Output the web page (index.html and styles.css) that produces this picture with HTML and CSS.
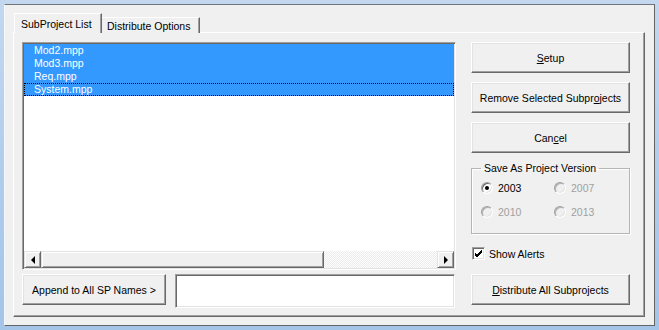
FILE: index.html
```html
<!DOCTYPE html>
<html lang="en">
<head>
    <meta charset="UTF-8">
    <title>Distribute Subprojects</title>
    <link rel="stylesheet" href="styles.css">
</head>
<body>
    <div class="dialog">
        <div class="tabs">
            <div class="tab active">SubProject List</div>
            <div class="tab">Distribute Options</div>
        </div>
        <div class="panel">
            <div class="left-col">
                <div class="listbox">
                    <ul class="items">
                        <li class="selected">Mod2.mpp</li>
                        <li class="selected">Mod3.mpp</li>
                        <li class="selected">Req.mpp</li>
                        <li class="selected focused">System.mpp</li>
                    </ul>
                    <div class="hscroll">
                        <div class="sb-btn"><span class="arrow-left"></span></div>
                        <div class="sb-thumb"></div>
                        <div class="sb-track"></div>
                        <div class="sb-btn"><span class="arrow-right"></span></div>
                    </div>
                </div>
                <div class="bottom-row">
                    <button class="btn append-btn">Append to All SP Names &gt;</button>
                    <div class="textbox"></div>
                </div>
            </div>
            <div class="right-col">
                <button class="btn"><u>S</u>etup</button>
                <button class="btn">Remove Selected Subpr<u>o</u>jects</button>
                <button class="btn">Can<u>c</u>el</button>
                <fieldset class="group">
                    <legend>Save As Project Version</legend>
                    <div class="radio-grid">
                        <label class="radio"><span class="circle checked"></span>2003</label>
                        <label class="radio disabled"><span class="circle"></span>2007</label>
                        <label class="radio disabled"><span class="circle"></span>2010</label>
                        <label class="radio disabled"><span class="circle"></span>2013</label>
                    </div>
                </fieldset>
                <label class="check">
                    <span class="box">
                        <svg width="9" height="9" viewBox="0 0 9 9"><path d="M1 4 L3 6 L8 1 M1 5 L3 7 L8 2 M1 6 L3 8 L8 3" stroke="#000" stroke-width="1" fill="none"/></svg>
                    </span>
                    Show Alerts
                </label>
                <button class="btn distribute-btn"><u>D</u>istribute All Subprojects</button>
            </div>
        </div>
    </div>
</body>
</html>
```

FILE: styles.css
```css
* {
    margin: 0;
    padding: 0;
    box-sizing: border-box;
    font-family: "Liberation Sans", Arial, sans-serif;
    font-size: 10.5px;
}

body {
    width: 659px;
    height: 330px;
    background: linear-gradient(180deg, #c3d8ef 0%, #aecbeb 60%, #a4c4e8 100%);
    overflow: hidden;
}

.dialog {
    margin: 4px 0 0 4px;
    width: 651px;
    height: 322px;
    background-color: #f0f0f0;
    border-top: 1px solid #70757c;
    border-right: 1px solid #646464;
    border-bottom: 1px solid #646464;
    border-left: 1px solid #f4f7fb;
    padding: 8px 0 0 8px;
}

/* tab strip */
.tabs {
    display: flex;
    align-items: flex-end;
    height: 20px;
    padding-left: 1px;
    margin-bottom: -1px;
    position: relative;
    z-index: 1;
}

.tab {
    height: 16px;
    line-height: 16px;
    white-space: nowrap;
    padding: 0 6px;
    border-top: 1px solid #fff;
    border-left: 1px solid #fff;
    border-right: 1px solid #696969;
    box-shadow: inset -1px 0 #a0a0a0;
    background-color: #f0f0f0;
    color: #000;
}

.tab.active {
    height: 20px;
    width: 88px;
    line-height: 16px;
    padding: 2px 0 0 6px;
}

.tab + .tab {
    width: 98px;
    padding-left: 5px;
    border-left: none;
}

/* tab page */
.panel {
    width: 632px;
    height: 285px;
    border-top: 1px solid #fff;
    border-left: 1px solid #fff;
    border-right: 1px solid #696969;
    border-bottom: 1px solid #696969;
    box-shadow: inset -1px -1px #a0a0a0;
    padding: 9px 0 0 8px;
    display: flex;
    gap: 15px;
}

.left-col {
    width: 434px;
    display: flex;
    flex-direction: column;
    gap: 4px;
}

.listbox {
    height: 228px;
    background-color: #fff;
    border-top: 1px solid #a0a0a0;
    border-left: 1px solid #a0a0a0;
    border-right: 1px solid #fff;
    border-bottom: 1px solid #fff;
    box-shadow: inset 1px 1px #696969, inset -1px -1px #e3e3e3;
    padding: 1px;
    display: flex;
    flex-direction: column;
}

.items {
    list-style: none;
    flex: 1;
}

.items li {
    height: 13px;
    line-height: 13px;
    padding-left: 10px;
    color: #000;
}

.items li.selected {
    background-color: #3399ff;
    color: #fff;
}

.items li.focused {
    outline: 1px dotted #000;
    outline-offset: -1px;
}

/* horizontal scrollbar */
.hscroll {
    height: 17px;
    display: flex;
}

.sb-btn,
.sb-thumb {
    background-color: #f0f0f0;
    border-top: 1px solid #e3e3e3;
    border-left: 1px solid #e3e3e3;
    border-right: 1px solid #696969;
    border-bottom: 1px solid #696969;
    box-shadow: inset 1px 1px #fff, inset -1px -1px #a0a0a0;
}

.sb-btn {
    width: 17px;
    display: flex;
    align-items: center;
    justify-content: center;
}

.sb-thumb {
    width: 283px;
}

.sb-track {
    flex: 1;
    background: repeating-conic-gradient(#fff 0 25%, #ebebeb 0 50%) 0 0 / 2px 2px;
}

.arrow-left {
    width: 0;
    height: 0;
    border-top: 4px solid transparent;
    border-bottom: 4px solid transparent;
    border-right: 4px solid #000;
}

.arrow-right {
    width: 0;
    height: 0;
    border-top: 4px solid transparent;
    border-bottom: 4px solid transparent;
    border-left: 4px solid #000;
}

.bottom-row {
    display: flex;
    gap: 9px;
}

.textbox {
    width: 280px;
    height: 34px;
    background-color: #fff;
    border-top: 1px solid #a0a0a0;
    border-left: 1px solid #a0a0a0;
    border-right: 1px solid #fff;
    border-bottom: 1px solid #fff;
    box-shadow: inset 1px 1px #696969, inset -1px -1px #e3e3e3;
}

/* push buttons */
.btn {
    display: block;
    width: 159px;
    height: 31px;
    background-color: #f0f0f0;
    color: #000;
    border-top: 1px solid #fff;
    border-left: 1px solid #fff;
    border-right: 1px solid #696969;
    border-bottom: 1px solid #696969;
    box-shadow: inset -1px -1px #a0a0a0, inset 1px 1px #e3e3e3;
    text-align: center;
}

.btn u {
    font-size: inherit;
}

.append-btn {
    width: 144px;
}

.right-col {
    width: 159px;
    display: flex;
    flex-direction: column;
    gap: 9px;
}

/* group box */
.group {
    width: 159px;
    height: 72px;
    border: 1px solid #b5b5b5;
    box-shadow: 1px 1px #fff, inset 1px 1px #fff;
    padding: 1px 0 0 9px;
}

.group legend {
    margin-left: 0;
    padding: 0 3px;
    line-height: 13px;
    color: #000;
}

.radio-grid {
    display: grid;
    grid-template-columns: 73px 73px;
    grid-auto-rows: 24px;
}

.radio {
    display: flex;
    align-items: center;
    gap: 5px;
    color: #000;
}

.radio.disabled {
    color: #a0a0a0;
}

.circle {
    width: 12px;
    height: 12px;
    border-radius: 50%;
    background-color: #fff;
    border: 1px solid;
    border-color: #a0a0a0 #fff #fff #a0a0a0;
    box-shadow: inset 1px 1px #696969, inset -1px -1px #e3e3e3;
    display: flex;
    align-items: center;
    justify-content: center;
}

.radio.disabled .circle {
    background-color: #f0f0f0;
    box-shadow: inset 1px 1px #b0b0b0, inset -1px -1px #e3e3e3;
}

.circle.checked::after {
    content: "";
    width: 4px;
    height: 4px;
    border-radius: 50%;
    background-color: #000;
}

/* checkbox */
.check {
    display: flex;
    align-items: center;
    gap: 4px;
    height: 13px;
    margin-top: 4px;
    margin-bottom: 5px;
    padding-left: 1px;
    color: #000;
}

.box {
    width: 13px;
    height: 13px;
    background-color: #fff;
    border-top: 1px solid #a0a0a0;
    border-left: 1px solid #a0a0a0;
    border-right: 1px solid #fff;
    border-bottom: 1px solid #fff;
    box-shadow: inset 1px 1px #696969, inset -1px -1px #e3e3e3;
    display: flex;
    align-items: center;
    justify-content: center;
}
```
